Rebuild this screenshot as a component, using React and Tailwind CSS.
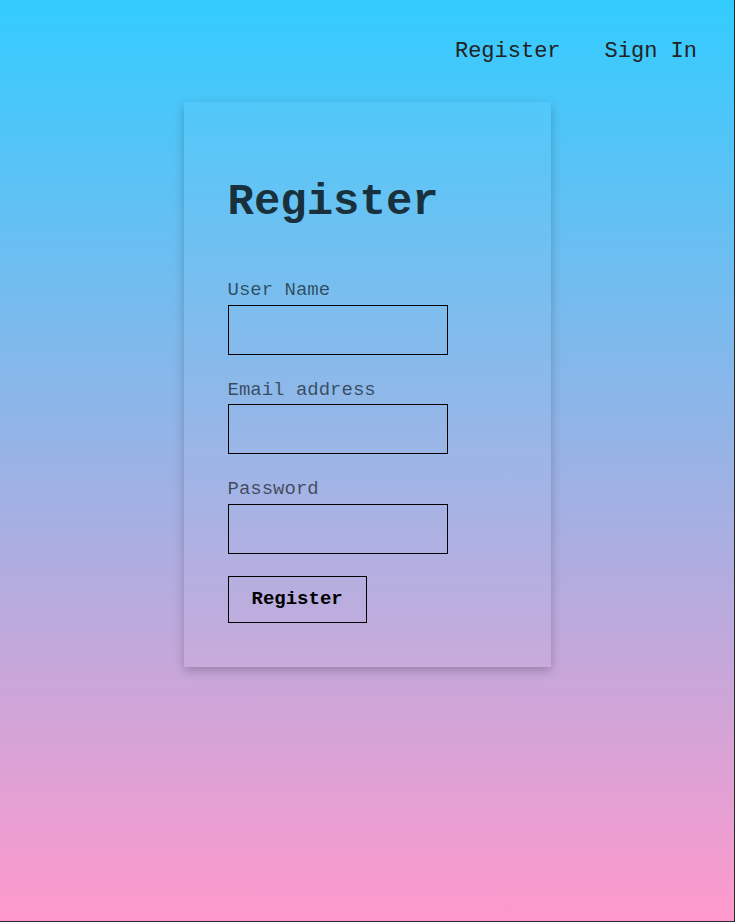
import React from "react";

const Field = ({ label, type = "text" }) => (
  <div className="flex flex-col">
    <label className="text-[19px] leading-[21.5px] text-black/60">{label}</label>
    <input
      type={type}
      className="mt-[3px] w-[220px] h-[50px] border border-black bg-transparent outline-none px-2"
    />
  </div>
);

export default function App() {
  return (
    <div
      className="min-h-screen bg-[linear-gradient(to_bottom,#33ccff,#ff99cc)] border-r border-b border-[#2a2a2a] text-[#222]"
      style={{ fontFamily: '"Liberation Mono", "Courier New", monospace' }}
    >
      <nav className="flex justify-end gap-[44px] pt-[39px] pr-[37px] text-[22px] leading-[25px]">
        <a href="#" className="text-[#222]">Register</a>
        <a href="#" className="text-[#222]">Sign In</a>
      </nav>

      <div className="flex justify-center mt-[38px]">
        <div className="w-[367px] bg-white/[0.04] shadow-[0_4px_10px_rgba(0,0,0,0.22)] pt-[75px] pb-[44px] px-[44px]">
          <h1 className="text-[44px] leading-[50px] font-bold text-black/75">Register</h1>

          <form className="mt-[53px] flex flex-col gap-[25px]" onSubmit={(e) => e.preventDefault()}>
            <Field label="User Name" />
            <Field label="Email address" type="email" />
            <Field label="Password" type="password" />
            <div className="-mt-[3px]">
              <button
                type="submit"
                className="border border-black px-[23px] py-[12px] text-[19px] leading-[21.5px] font-bold text-black bg-transparent"
              >
                Register
              </button>
            </div>
          </form>
        </div>
      </div>
    </div>
  );
}
